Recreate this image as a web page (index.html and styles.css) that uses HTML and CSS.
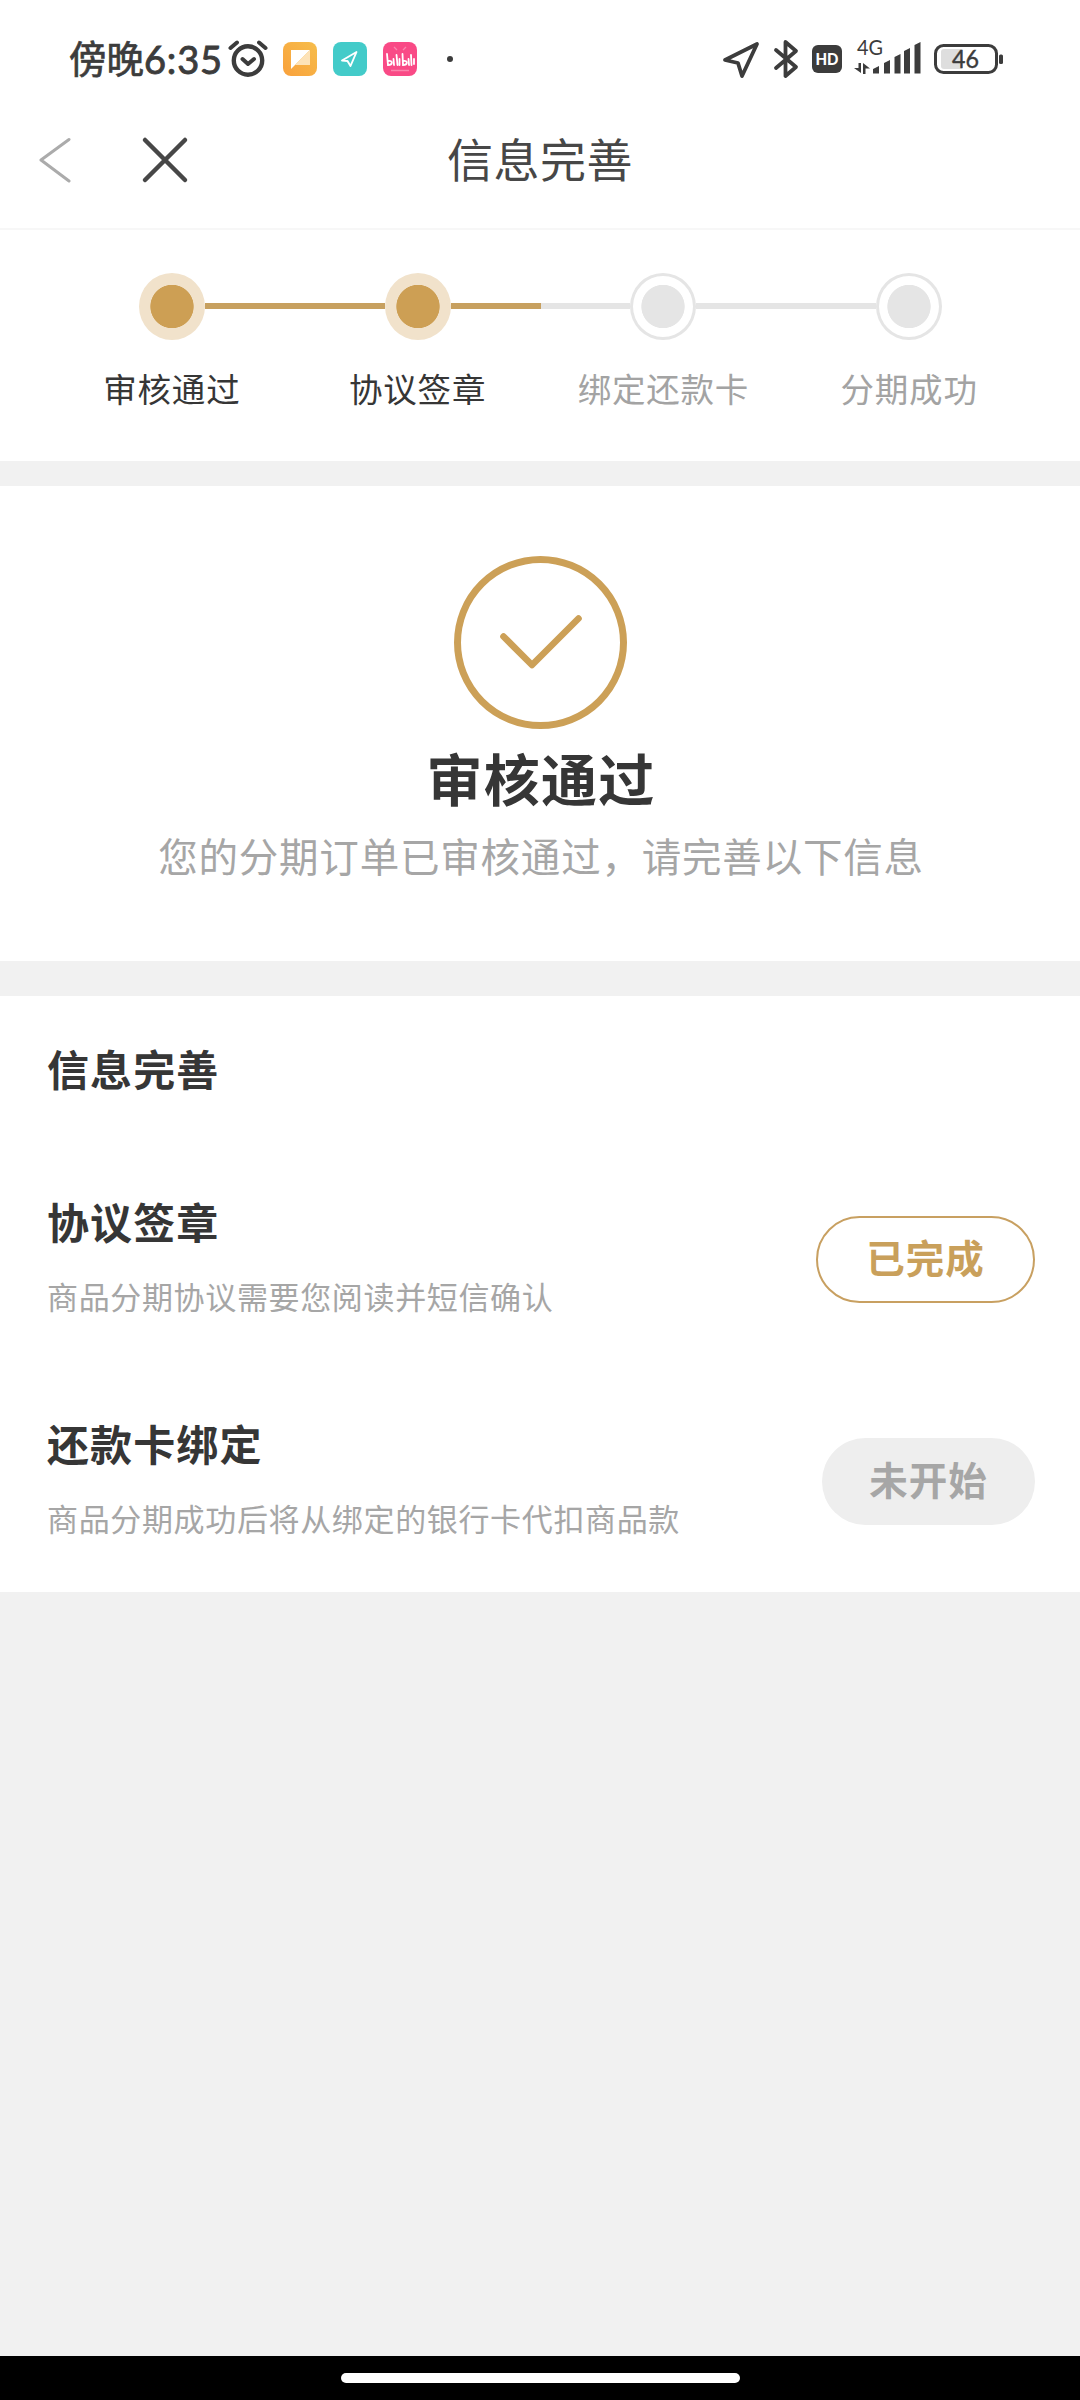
FILE: index.html
```html
<!DOCTYPE html>
<html lang="zh-CN">
<head>
<meta charset="utf-8">
<title>信息完善</title>
<link rel="stylesheet" href="styles.css">
</head>
<body>
<div class="screen">
  <div class="statusbar">
    <div class="status-left">
      <span class="daypart">傍晚</span><span class="clock">6:35</span>
      <svg class="alarm" width="42" height="40" viewBox="0 0 42 40" fill="none" stroke="#3c3c3c" stroke-linecap="round" stroke-linejoin="round">
        <circle cx="20" cy="22.500" r="14.200" stroke-width="4.400"/>
        <path d="M2.500 10 9 4.500M31 4.500l6.500 5.500" stroke-width="4"/>
        <path d="M14.500 21l5.500 5 6-5" stroke-width="4"/>
      </svg>
      <svg class="app" width="34" height="34" viewBox="0 0 34 34">
        <defs><linearGradient id="amber" x1="1" y1="0" x2="0" y2="1"><stop offset="0" stop-color="#f6bd4b"/><stop offset="1" stop-color="#f9a13c"/></linearGradient></defs>
        <rect width="34" height="34" rx="8" fill="url(#amber)"/>
        <path d="M8 8h19L8 27z" fill="#fff"/>
        <path d="M27 8v15H12z" fill="#fde3b8"/>
      </svg>
      <svg class="app" width="34" height="34" viewBox="0 0 34 34">
        <rect width="34" height="34" rx="8" fill="#43cbc9"/>
        <path d="M23.500 10 9 18.500l5.500.5 3 5z" fill="none" stroke="#fff" stroke-width="1.900" stroke-linejoin="round"/>
      </svg>
      <svg class="app" width="34" height="34" viewBox="0 0 34 34">
        <rect width="34" height="34" rx="8" fill="#f94a86"/>
        <path d="M11 5l3 3M23 5l-3 3M8 28.500h18" stroke="#fb85ad" stroke-width="1.300"/>
        <g fill="none" stroke="#fff" stroke-width="1.800" stroke-linecap="round">
          <path d="M4 12l1 11c5 0 5-5 .5-4M10.500 17l.5 6M13.500 13l1 10M16.500 17v6"/>
          <path d="M19.500 12l.5 11c5 0 5-5 .5-4M25.500 17l.5 6M28 13l.5 10M31 17v5"/>
        </g>
      </svg>
      <i class="more-dot"></i>
    </div>
    <div class="status-right">
      <svg width="38" height="40" viewBox="0 0 38 40"><path d="M3 21 35 5 20 37 16 24z" fill="none" stroke="#3c3c3c" stroke-width="3.800" stroke-linejoin="round"/></svg>
      <svg class="bluetooth" width="26" height="40" viewBox="0 0 26 40"><path d="M3 11l20 17-10.500 9V3L23 12 3 29" fill="none" stroke="#3c3c3c" stroke-width="3.800" stroke-linecap="round" stroke-linejoin="round"/></svg>
      <svg class="hd" width="30" height="28" viewBox="0 0 30 28"><rect width="30" height="28" rx="6" fill="#3c3c3c"/><text x="3.500" y="20" textLength="23" lengthAdjust="spacingAndGlyphs" class="hd-text">HD</text></svg>
      <svg class="signal" width="68" height="48" viewBox="0 -4 68 48" fill="#3c3c3c">
        <text x="3" y="17" textLength="26" lengthAdjust="spacingAndGlyphs" class="net-text">4G</text>
        <path d="M4.500 25h2.500v10L0 30h4.500zM9 36V25l7 5.500h-4.500V36z"/>
        <path d="M19 35.500V31l6-3v7.500zM30 35.500V25l6-3v13.500zM40.500 35.500V19l6-3v19.500zM50 35.500V13l6-3v25.500zM60.500 35.500V7l6-3v31.500z"/>
      </svg>
      <svg class="battery" width="70" height="32" viewBox="0 0 70 32">
        <rect x="7" y="6" width="22" height="20" rx="3" fill="#dedede"/>
        <rect x="1.500" y="2.500" width="61" height="27" rx="8" fill="none" stroke="#3c3c3c" stroke-width="3"/>
        <rect x="65" y="11.500" width="4" height="9.500" rx="1.500" fill="#3c3c3c"/>
        <text x="18" y="24.500" textLength="27" lengthAdjust="spacingAndGlyphs" class="battery-text">46</text>
      </svg>
    </div>
  </div>

  <header class="navbar">
    <div class="nav-actions">
      <svg width="34" height="46" viewBox="0 0 34 46"><path d="M31 2.500 3 23l28 21" fill="none" stroke="#ababab" stroke-width="3" stroke-linecap="round" stroke-linejoin="round"/></svg>
      <svg width="48" height="48" viewBox="0 0 48 48"><path d="M4 4l40 40M44 4 4 44" stroke="#474747" stroke-width="4.500" stroke-linecap="round"/></svg>
    </div>
    <h1 class="nav-title">信息完善</h1>
  </header>

  <section class="steps">
    <div class="step done"><div class="track"><i class="line none"></i><i class="node"></i><i class="line gold"></i></div><span>审核通过</span></div>
    <div class="step done"><div class="track"><i class="line gold"></i><i class="node"></i><i class="line gold"></i></div><span>协议签章</span></div>
    <div class="step"><div class="track"><i class="line"></i><i class="node"></i><i class="line"></i></div><span>绑定还款卡</span></div>
    <div class="step"><div class="track"><i class="line"></i><i class="node"></i><i class="line none"></i></div><span>分期成功</span></div>
  </section>

  <section class="result">
    <svg width="174" height="174" viewBox="0 0 174 174" fill="none" stroke="#cca057">
      <circle cx="87.500" cy="87.500" r="83" stroke-width="7"/>
      <path d="M50.500 81.500 79 110 125.500 63.500" stroke-width="6.600" stroke-linecap="round" stroke-linejoin="round"/>
    </svg>
    <h2>审核通过</h2>
    <p>您的分期订单已审核通过，请完善以下信息</p>
  </section>

  <section class="tasks">
    <h3>信息完善</h3>
    <div class="task">
      <div><h4>协议签章</h4><p>商品分期协议需要您阅读并短信确认</p></div>
      <button class="badge complete">已完成</button>
    </div>
    <div class="task">
      <div><h4>还款卡绑定</h4><p>商品分期成功后将从绑定的银行卡代扣商品款</p></div>
      <button class="badge pending">未开始</button>
    </div>
  </section>

  <footer class="homebar"><i></i></footer>
</div>
</body>
</html>
```
FILE: styles.css
```css
* { box-sizing: border-box; margin: 0; padding: 0; }
body {
  background: #f1f1f1;
  color: #363636;
  font-family: "Noto Sans CJK SC", sans-serif;
}
svg { display: block; flex: none; }
i { display: block; }
.screen { width: 1080px; height: 2400px; display: flex; flex-direction: column; }

.statusbar {
  height: 110px;
  padding: 0 76px 0 69px;
  display: flex;
  justify-content: space-between;
  align-items: flex-start;
  background: #fff;
  color: #3c3c3c;
}
.status-left, .status-right { display: flex; align-items: center; height: 118px; }
.daypart { font-size: 37.5px; font-weight: 400; line-height: 50px; width: 75px; white-space: nowrap; margin-top: -5px; -webkit-text-stroke: 0.7px #3c3c3c; }
.clock { font-family: Lato, sans-serif; font-size: 38px; font-weight: 400; line-height: 50px; width: 79px; letter-spacing: 0.8px; -webkit-text-stroke: 0.9px #3c3c3c; }
.alarm { margin: -2px 0 0 5px; }
.app { margin-right: 16px; }
.alarm + .app { margin-left: 13px; }
.more-dot { width: 6px; height: 6px; border-radius: 50%; background: #3c3c3c; margin-left: 14px; }
.bluetooth { margin: -1px 0 0 13px; }
.hd { margin-left: 13px; }
.hd-text { font: 900 17px Lato, sans-serif; fill: #fff; }
.signal { margin: -2px 0 0 12px; }
.net-text { font: 400 21px Lato, sans-serif; }
.battery { margin-left: 12px; }
.battery-text { font: 400 25px Lato, sans-serif; fill: #3c3c3c; stroke: #3c3c3c; stroke-width: 0.4px; }

.navbar {
  height: 120px;
  border-bottom: 2px solid #f7f7f7;
  display: grid;
  grid-template-columns: 1fr auto 1fr;
  padding: 24px 38px 0;
  background: #fff;
}
.nav-actions { display: flex; align-items: center; gap: 69px; height: 52px; }
.nav-title { font-size: 46px; letter-spacing: 0.5px; line-height: 47px; font-weight: 400; color: #474747; }

.steps {
  height: 231px;
  padding: 43px 48px 0 49px;
  display: grid;
  grid-template-columns: repeat(4, 1fr);
  background: #fff;
}
.step { display: flex; flex-direction: column; align-items: center; color: #a3a3a3; font-size: 33.500px; letter-spacing: 0.800px; line-height: 50px; }
.step.done { color: #363636; }
.step span { margin-top: 23px; }
.track { display: flex; align-items: center; width: 100%; }
.line { flex: 1; height: 6px; background: #e5e5e5; margin-top: -1px; }
.line.gold { background: #c7a05f; }
.line.none { background: transparent; }
.node {
  width: 66px; height: 67px; border-radius: 50%;
  border: 3px solid #e5e5e5;
  background: radial-gradient(circle, #e5e5e5 21.300px, #fff 22px);
}
.done .node { border-color: #f1e2cb; background: radial-gradient(circle, #cd9f54 21.300px, #f1e2cb 22px); }

.result {
  margin-top: 25px;
  height: 475px;
  padding-top: 69px;
  display: flex;
  flex-direction: column;
  align-items: center;
  background: #fff;
}
.result h2 { font-size: 56px; letter-spacing: 1.200px; font-weight: 700; line-height: 70px; margin: 13px 0 0 2px; }
.result p { font-size: 39.500px; letter-spacing: 0.800px; line-height: 50px; margin: 18px 0 0 2px; color: #a6a6a6; }

.tasks { margin-top: 35px; height: 596px; padding: 42px 45px 0 47px; background: #fff; }
.tasks h3, .tasks h4 { font-size: 42px; letter-spacing: 1.100px; font-weight: 700; line-height: 60px; }
.task { display: flex; justify-content: space-between; align-items: flex-start; height: 221.5px; }
.tasks h3 { margin-bottom: 93px; }
.task p { font-size: 31px; letter-spacing: 0.650px; line-height: 46px; margin-top: 22px; color: #a6a6a6; }
.badge {
  margin-top: 25px;
  height: 87px;
  border-radius: 44px;
  font: 700 38.500px/75px "Noto Sans CJK SC", sans-serif;
  letter-spacing: 1px;
  padding-bottom: 6px;
}
.complete { width: 219px; border: 2px solid #c8a061; background: #fff; color: #c9a05b; }
.pending { width: 213px; border: 0; background: #eee; color: #a6a6a6; }

.homebar { margin-top: auto; height: 44px; padding-top: 17px; background: #000; }
.homebar i { width: 399px; height: 10px; border-radius: 5px; background: #fff; margin: 0 auto; }
```
